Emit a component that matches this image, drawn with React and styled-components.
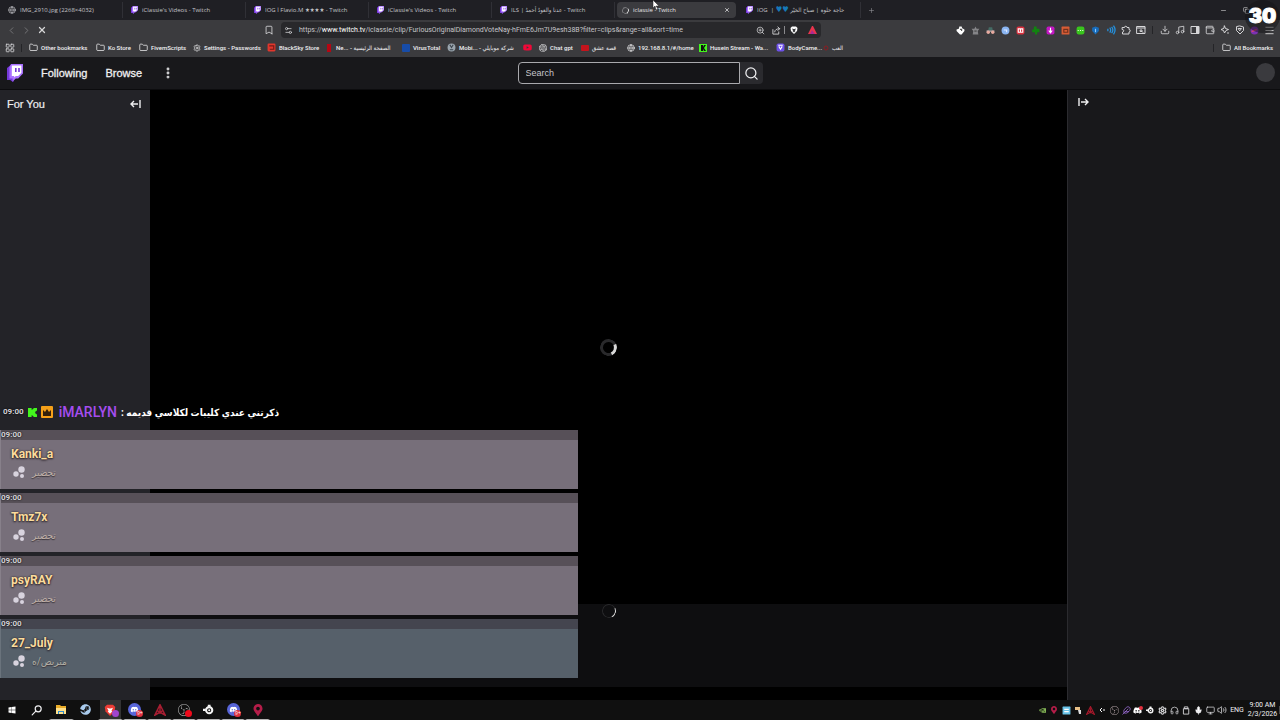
import React from 'react';
import styled, { createGlobalStyle, css, keyframes } from 'styled-components';
import {
  ArrowRightFromLine, Bookmark, ChevronLeft, ChevronRight, Download, Folder,
  Globe, Headphones, LayoutGrid, Menu, Mic, Minus, Monitor, Music, PanelRight, Plus,
  Search, Settings, Volume2, Wallet, X, ZoomIn, Copy,
  Settings2, EllipsisVertical, Feather,
} from 'lucide-react';
import { FaDiscord, FaMapMarkerAlt, FaSteam, FaWindows, FaYoutube } from 'react-icons/fa';
import { SiNvidia, SiObsstudio, SiOpenai } from 'react-icons/si';

const uiFont = '"Open Sans", "DejaVu Sans Condensed", "DejaVu Sans", sans-serif';
const narrowFont = 'Roboto, "DejaVu Sans Condensed", "DejaVu Sans", sans-serif';

const GlobalStyle = createGlobalStyle`
  * { box-sizing: border-box; }
  body { margin: 0; background: #000; color: #efeff1; font-family: ${uiFont}; }
  button, input { font: inherit; color: inherit; margin: 0; padding: 0; border: 0; background: none; }
  a { color: inherit; text-decoration: none; }
  svg { display: block; flex: none; }
`;

const Screen = styled.div`
  position: relative;
  display: flex;
  flex-direction: column;
  height: 100vh;
  overflow: hidden;
`;

/* browser chrome */

const TabStrip = styled.div`
  display: flex;
  align-items: center;
  flex: none;
  height: 20px;
  background: #1f1f24;
  font-size: 6px;
  color: #c4c4c8;
`;

const Tab = styled.button`
  display: flex;
  align-items: center;
  gap: 4px;
  flex: 0 1 123px;
  min-width: 0;
  height: 16px;
  padding: 0 8px;
  white-space: nowrap;
  border-right: 1px solid #303036;
  border-radius: 0;
  ${(props) => props.$active && css`
    flex-basis: 119px;
    margin: 0 2px;
    padding: 0 5px;
    background: #3b3b3f;
    border-color: transparent;
    border-radius: 4px;
    color: #e6e6e8;
  `}
`;

const TabTitle = styled.span`
  flex: 1;
  overflow: hidden;
  line-height: 12px;
  text-align: left;
`;

const Heart = styled.span`
  color: #1679b8;
  font-size: 8px;
  line-height: 8px;
`;

const IconButton = styled.button`
  display: flex;
  align-items: center;
  justify-content: center;
  flex: none;
  width: ${(props) => props.$w || 15}px;
  height: 16px;
  color: ${(props) => props.$color || '#d6d6d8'};
`;

const WindowButtons = styled.div`
  display: flex;
  gap: 8px;
  margin-left: auto;
  padding-right: 26px;
`;

const Toolbar = styled.div`
  display: flex;
  align-items: center;
  flex: none;
  height: 20px;
  padding: 0 3px 0 4px;
  background: #3b3b3e;
`;

const Nav = styled.div`
  display: flex;
  flex: 0 0 257px;
`;

const Address = styled.div`
  display: flex;
  align-items: center;
  flex: 1;
  min-width: 0;
  height: 16px;
  margin: 0 132px 0 5px;
  border-radius: 4px;
  background: #28282b;
`;

const Url = styled.a`
  flex: 1;
  overflow: hidden;
  padding-left: 3px;
  font-family: ${narrowFont};
  font-size: 7px;
  white-space: nowrap;
  color: #c6c6c9;
`;

const Host = styled.span`
  color: #fff;
`;

const Divider = styled.span`
  flex: none;
  width: 1px;
  height: 8px;
  margin: 0 ${(props) => props.$space || 0}px;
  background: ${(props) => props.$color || '#242427'};
`;

const BookmarkBar = styled.nav`
  display: flex;
  align-items: center;
  flex: none;
  height: 17px;
  padding: 0 7px 2px 2px;
  background: #3b3b3e;
  color: #f0f0f2;
  font-family: ${narrowFont};
  font-size: 6px;
  font-weight: 500;
`;

const BookmarkLink = styled.a`
  display: flex;
  align-items: center;
  gap: 3px;
  flex: 0 0 ${(props) => props.$w}px;
  white-space: nowrap;
`;

const AllBookmarks = styled(BookmarkLink)`
  flex: none;
`;

const Right = styled.div`
  display: flex;
  align-items: center;
  margin-left: auto;
`;

const Badge = styled.span`
  display: flex;
  flex: none;
  width: 8px;
  height: ${(props) => props.$h || 8}px;
  border-radius: 1px;
  background: ${(props) => props.$bg};
`;

/* twitch page */

const Header = styled.header`
  display: grid;
  grid-template-columns: 1fr auto 1fr;
  align-items: center;
  flex: none;
  height: 33px;
  background: #18181b;
  border-bottom: 1px solid #0c0c0e;
  font-family: "Liberation Sans", Arial, sans-serif;
`;

const HeaderLinks = styled.nav`
  display: flex;
  align-items: center;
  gap: 18px;
  padding-left: 7px;
  font-size: 11px;
  -webkit-text-stroke: 0.3px #efeff1;
`;

const SearchForm = styled.form`
  display: flex;
  height: 22px;
`;

const SearchInput = styled.input`
  width: 222px;
  padding: 0 7px;
  border: 1px solid #a9a9ad;
  border-radius: 4px 0 0 4px;
  background: #151518;
  font-size: 9px;
  outline: none;

  &::placeholder { color: #c6c6ca; opacity: 1; }
`;

const SearchButton = styled.button`
  display: flex;
  align-items: center;
  justify-content: center;
  width: 23px;
  border-radius: 0 4px 4px 0;
  background: #2a2a2e;
`;

const Avatar = styled.button`
  justify-self: end;
  width: 19px;
  height: 19px;
  margin: 0 5px 2px 0;
  border-radius: 50%;
  background: #3a3a3e;
`;

const Body = styled.div`
  display: flex;
  flex: 1;
  min-height: 0;
`;

const Sidebar = styled.aside`
  display: flex;
  align-items: flex-start;
  justify-content: space-between;
  flex: 0 0 150px;
  padding: 6px 8px 6px 7px;
  background: #232328;
  font: 11px/16px "Liberation Sans", Arial, sans-serif;
  -webkit-text-stroke: 0.2px #efeff1;
`;

const Main = styled.main`
  display: flex;
  flex-direction: column;
  flex: 1;
  background: #000;
`;

const Player = styled.div`
  display: flex;
  align-items: center;
  justify-content: center;
  flex: 1;
`;

const Details = styled.div`
  display: flex;
  align-items: flex-start;
  justify-content: center;
  height: 83px;
  margin-bottom: 13px;
  background: #0e0e10;
`;

const spin = keyframes`
  from { transform: rotate(0deg); }
  to { transform: rotate(360deg); }
`;

const Spinner = styled.span`
  flex: none;
  width: ${(props) => props.$size}px;
  height: ${(props) => props.$size}px;
  border: ${(props) => props.$stroke}px solid ${(props) => props.$track || '#29292b'};
  border-right-color: #d8d8d8;
  border-radius: 50%;
  rotate: 20deg;
  animation: ${spin} 1s linear infinite paused;
`;

const ChatColumn = styled.aside`
  flex: 0 0 213px;
  padding: 4px 8px;
  border-left: 1px solid #2b2b2f;
  background: #18181b;
`;

/* chat overlay */

const Overlay = styled.section`
  position: absolute;
  left: 0;
  bottom: 42px;
  width: 578px;
  max-width: 100%;
  font-family: Roboto, "DejaVu Sans Condensed", "DejaVu Sans", sans-serif;
`;

const Message = styled.div`
  display: flex;
  align-items: center;
  gap: 4px;
  height: 18px;
  margin-bottom: 9px;
  padding-left: 3px;
`;

const Time = styled.time`
  font-size: 8px;
  line-height: 10px;
  font-weight: 700;
  color: #d4d2d6;
  text-shadow: 0 0 2px #000;
`;

const Author = styled.span`
  padding-left: 2px;
  font-size: 14px;
  font-weight: 500;
  color: #a64df0;
`;

const MessageText = styled.span`
  font-size: 10px;
  font-weight: 700;
  color: #fff;
`;

const Card = styled.article`
  height: 59px;
  margin-top: 4px;
  border-left: 1px solid rgba(255, 255, 255, 0.12);
  background: ${(props) => (props.$blue ? '#56606a' : '#776f7a')};
`;

const CardTop = styled.div`
  display: flex;
  height: 10px;
  background: ${(props) => (props.$blue ? '#44454f' : '#575058')};
`;

const CardBody = styled.div`
  padding: 5px 10px;
`;

const Viewer = styled.div`
  font-size: 12px;
  line-height: 18px;
  font-weight: 700;
  color: #fbdc9c;
  text-shadow: 0 1px 2px #2a2228, 0 0 2px #2a2228;
`;

const Reply = styled.div`
  display: flex;
  align-items: center;
  gap: 6px;
  height: 18px;
  padding-left: 2px;
  font-size: 10px;
  color: ${(props) => (props.$blue ? '#b0aea4' : '#bdaea6')};
  text-shadow: 0 1px 1px #3a343b;
`;

/* windows taskbar */

const Taskbar = styled.footer`
  display: flex;
  flex: none;
  height: 20px;
  background: #101010;
`;

const Apps = styled.div`
  display: grid;
  grid-auto-flow: column;
  grid-auto-columns: 1fr;
  width: 270px;
`;

const TaskButton = styled.button`
  position: relative;
  display: flex;
  align-items: center;
  justify-content: center;
  border-bottom: 1px solid ${(props) => (props.$open ? '#b4b4b4' : 'transparent')};
  border-left: 2px solid #101010;
  border-right: 2px solid #101010;
  background: ${(props) => (props.$active ? '#333' : 'none')};
`;

const Unread = styled.span`
  position: absolute;
  right: 2px;
  bottom: 2px;
  width: 7px;
  height: 7px;
  border-radius: 50%;
  background: ${(props) => props.$bg || '#e0303e'};
  color: #fff;
  font-size: 5px;
  line-height: 7px;
  text-align: center;
`;

const Tray = styled.div`
  display: flex;
  align-items: center;
  margin-left: auto;
  font-size: 7px;
`;

const Language = styled.span`
  width: 18px;
  font-family: ${narrowFont};
  text-align: center;
`;

const Clock = styled.div`
  width: 33px;
  font-family: ${narrowFont};
  font-size: 7px;
  line-height: 9px;
  text-align: center;
`;

const Counter = styled.div`
  position: absolute;
  top: 0;
  right: 0;
  width: 35px;
  height: 33px;
  border-radius: 50%;
  background: rgba(20, 20, 22, 0.5);
  color: #fff;
  font: 900 20px/33px Inter, sans-serif;
  text-align: center;
  -webkit-text-stroke: 1px #fff;
`;

const Pointer = styled.svg`
  position: absolute;
  top: 0;
  left: 652px;
`;

const TwitchLogo = ({ size }) => (
  <svg width={size} height={size * 1.15} viewBox="0 0 20 23">
    <path d="M0 5L5 1v14l3 3v5l-4-3H0z" fill="#7438d8" />
    <path d="M5 0h15v12l-6 6h-3l-4 4v-4H3V4z" fill="#a970ff" />
    <path d="M6 2h12v9l-4 4h-3l-2 2v-2H6z" fill="#fff" />
    <path d="M10 5h2v5h-2zM14 5h2v5h-2z" fill="#7438d8" />
  </svg>
);

const KickLogo = ({ size }) => (
  <svg width={size} height={size} viewBox="0 0 10 10">
    <path d="M0 0h4v2h1V1h1V0h4v3H9v1H8v2h1v1h1v3H6V9H5V8H4v2H0z" fill="#43f51d" />
  </svg>
);

const KickTile = () => (
  <svg width="8" height="8" viewBox="0 0 8 8">
    <rect width="8" height="8" fill="#43f51d" />
    <path d="M2 1h2v2l1-2h2L5 4l2 3H5L4 5v2H2z" fill="#101010" />
  </svg>
);

const Dots = () => (
  <svg width="13" height="13" viewBox="0 0 13 13" fill="#d8d3de">
    <circle cx="8.500" cy="3.500" r="3.200" />
    <circle cx="3" cy="8" r="2.700" />
    <circle cx="9" cy="10" r="2" />
  </svg>
);

const Brave = ({ size, color }) => (
  <svg width={size} height={size} viewBox="0 0 16 16">
    <path d="M4 1h8l3 3-1 6-6 6-6-6-1-6z" fill={color} />
    <path d="M4 5l3 1h2l3-1-2 4 1 1-3 3-3-3 1-1z" fill={color === '#fff' ? '#3b3b3e' : '#fff'} />
  </svg>
);

const Peak = ({ size, color }) => (
  <svg width={size} height={size} viewBox="0 0 16 16" fill="none" stroke={color} strokeWidth="2">
    <path d="M1 15L8 1l7 14-5-3H6zM8 4v8M5 9l3 3 3-3" />
  </svg>
);

const Line = ({ size = 10, d }) => (
  <svg width={size} height={size} viewBox="0 0 20 20" fill="none" stroke="currentColor" strokeWidth="2" strokeLinejoin="round" strokeLinecap="round">
    <path d={d} />
  </svg>
);

const Disc = ({ bg, fg = '#fff', r = 7, d = 'M5 8h6M8 5v6' }) => (
  <svg width="9" height="9" viewBox="0 0 16 16">
    <rect x="1" y="1" width="14" height="14" rx={r} fill={bg} />
    <path d={d} fill="none" stroke={fg} strokeWidth="2" />
  </svg>
);

const DiscordDisc = () => (
  <svg width="13" height="13" viewBox="0 0 16 16">
    <circle cx="8" cy="8" r="8" fill="#5865d8" />
    <g transform="translate(3 3)"><FaDiscord size={10} color="#fff" /></g>
  </svg>
);

const SteelRing = ({ size }) => (
  <svg width={size} height={size} viewBox="0 0 16 16">
    <circle cx="9" cy="9" r="4.500" fill="none" stroke="#f4f4f4" strokeWidth="3" />
    <circle cx="9" cy="9" r="1.500" fill="#f4f4f4" />
    <path d="M7 1h4v3H7zM0 7h4v3H0z" fill="#f4f4f4" />
  </svg>
);

const CollapseIcon = ({ flip }) => (
  <svg width="12" height="12" viewBox="0 0 12 12" fill="none" stroke="#efeff1" strokeWidth="1.400">
    <path d={flip ? 'M11 2v8M9 6H2M5 3L2 6l3 3' : 'M1 2v8M3 6h7M7 3l3 3-3 3'} />
  </svg>
);

const tabs = [
  { icon: <Globe size={8} />, title: 'IMG_2910.jpg (2268×4032)' },
  { title: "iClassie's Videos - Twitch" },
  { title: 'IOG  ا Flavio.M ★★★★ - Twitch' },
  { title: "iClassie's Videos - Twitch" },
  { title: 'ILS | عدنا والعودُ أحمدُ - Twitch' },
  { icon: <Spinner $size={7} $stroke={1} $track="#77777a" />, title: 'iclassie - Twitch', active: true },
  { title: <>IOG &nbsp;| <Heart>♥♥</Heart> حاجة حلوة | صباح الخيْر</> },
];

const folder = <Folder size={9} strokeWidth={2} />;

const bookmarks = [
  { icon: folder, label: 'Other bookmarks', w: 67 },
  { icon: folder, label: 'Ko Store', w: 43 },
  { icon: folder, label: 'FivemScripts', w: 54 },
  { icon: <Settings size={8} />, label: 'Settings - Passwords', w: 74 },
  { icon: <Disc bg="#e0362c" fg="#701b18" r={2} d="M4 5h8v6H5" />, label: 'BlackSky Store', w: 58 },
  { icon: <svg width="8" height="8" viewBox="0 0 8 8"><path d="M2 0h4v8H2z" fill="#b40613" /></svg>, label: 'Ne... - الصفحة الرئيسية', w: 77 },
  { icon: <Badge $bg="#174ca8" />, label: 'VirusTotal', w: 45 },
  { icon: <Disc bg="#9aa5ae" fg="#39434c" d="M5 3l3 5 3-5M5 12h6" />, label: 'Mobi... - شركة موبايلي', w: 76 },
  { icon: <FaYoutube size={9} color="#f00838" />, label: '', w: 16 },
  { icon: <SiOpenai size={8} />, label: 'Chat gpt', w: 42 },
  { icon: <Badge $bg="#c4141c" $h={6} />, label: 'قصة عشق', w: 46 },
  { icon: <Globe size={8} />, label: '192.168.8.1/#/home', w: 72 },
  { icon: <KickTile />, label: 'Husein Stream - Wa...', w: 77 },
  { icon: <Disc bg="#6d50e8" r={3} d="M5 6l3 5 3-5M4 4h8" />, label: 'BodyCame...', w: 47 },
  { icon: <svg width="6" height="6" viewBox="0 0 6 6"><circle cx="3" cy="3" r="2" fill="none" stroke="#8b1d22" /></svg>, label: 'العب', w: 24 },
];

const extensions = [
  ['Tag', <svg width="9" height="9" viewBox="0 0 16 16"><path d="M6 1h4l1 3 4 2v3l-5 6H7L1 9V6l4-1z" fill="#fff" /><path d="M7 6h3v3" fill="none" stroke="#555" strokeWidth="2" /></svg>],
  ['Star', <svg width="9" height="9" viewBox="0 0 16 16"><path d="M8 1l2 4h5l-3 4 1 6H3l1-6-3-4h5z" fill="#858588" /><path d="M6 9h4" stroke="#444" strokeWidth="2" /></svg>],
  ['Incognito', <svg width="9" height="9" viewBox="0 0 16 16"><path d="M5 2h6l1 5H4z" fill="#456b65" /><path d="M1 9h14" stroke="#ccc" strokeWidth="2" /><circle cx="4" cy="11" r="3" fill="#e8aaa0" /><circle cx="12" cy="11" r="3" fill="#e8aaa0" /></svg>],
  ['Globe', <Disc bg="#8ab5f2" fg="#dfeaff" d="M5 7h5v4" />],
  ['Recorder', <svg width="9" height="9" viewBox="0 0 16 16"><rect x="1" y="1" width="14" height="14" rx="3" fill="#d92e3c" /><rect x="3" y="4" width="10" height="8" fill="#fff" /><path d="M5 6h2v4H5zM9 6h2v4H9z" fill="#d92e3c" /></svg>],
  ['Clover', <svg width="9" height="9" viewBox="0 0 16 16"><path d="M5 1h5v4h5v6h-4v4H7v-4H2V6h3z" fill="#11830f" /></svg>],
  ['Downloader', <Disc bg="#c316c4" r={3} d="M8 3v9M5 8l3 4 3-4" />],
  ['Capture', <Disc bg="#d75c35" fg="#71301d" r={1} d="M5 6h7v5H5z" />],
  ['New', <Disc bg="#39c51d" fg="#dfffd8" r={4} d="M3 8h2M7 8h2M11 8h2" />],
  ['Guard', <svg width="9" height="9" viewBox="0 0 16 16"><path d="M8 1l6 2v6l-6 6-6-6V3z" fill="#176bb9" /><path d="M8 5v6" stroke="#8cc8ff" strokeWidth="2" /></svg>],
  ['Sound', <svg width="10" height="10" viewBox="0 0 16 16" fill="none" stroke="#2492e0" strokeWidth="2"><path d="M3 6v4M6 4q3 4 0 8M9 3q4 5 0 10M12 1q5 7 0 14" /></svg>],
  ['Extensions', <Line d="M3 5h4a2.500 2.500 0 0 1 5 0h4v4a2.500 2.500 0 0 1 0 5v4H3v-4a2.500 2.500 0 0 0 0-5z" />],
  ['Page search', <Line d="M2 3h16v14H2zM2 6h16M9 10h3v3H9zM12 13l2 2" />],
];

const tools = [
  ['Downloads', <Download size={10} />],
  ['Playlist', <Music size={10} />],
  ['Side panel', <svg width="10" height="10" viewBox="0 0 20 20"><path d="M2 3h16v14H2z" fill="none" stroke="currentColor" strokeWidth="2" /><path d="M12 3h6v14h-6z" fill="currentColor" /></svg>],
  ['Wallet', <Wallet size={10} />],
  ['Leo', <Line d="M9 2l2 5 6 2-5 2-3 5-2-5-5-2 5-2zM16 15v2" />],
  ['VPN', <Line d="M10 2l7 2v7l-7 7-7-7V4zM7 7h6l-3 4z" />],
  ['Profile', <Disc bg="#7c31b3" fg="#dd4672" d="M3 10l9-4" />],
  ['Menu', <Menu size={11} />],
];

const apps = [
  { name: 'Start', icon: <FaWindows size={8} color="#fff" /> },
  { name: 'Search', icon: <Line size={12} d="M17 8a5 5 0 1 1-10 0 5 5 0 1 1 10 0M8 12l-6 6" /> },
  { name: 'Explorer', open: true, icon: <svg width="12" height="11" viewBox="0 0 12 11"><path d="M1 1h4l1 1h5v8H1z" fill="#e9ac28" /><path d="M1 4h10v6H1z" fill="#ffe08a" /><path d="M3 7h6v3H8V8H4v2H3z" fill="#2d8bd0" /></svg> },
  { name: 'Steam', icon: <FaSteam size={11} color="#a9cbed" /> },
  { name: 'Brave', open: true, active: true, icon: <Brave size={12} color="#ed3d35" />, unread: '', badge: '#a044cf' },
  { name: 'Discord', open: true, icon: <DiscordDisc />, unread: '9+' },
  { name: 'Peak', open: true, icon: <Peak size={12} color="#a71e32" /> },
  { name: 'OBS', open: true, icon: <SiObsstudio size={12} color="#bbb" />, unread: '', badge: '#f00b1c' },
  { name: 'SteelSeries', open: true, icon: <SteelRing size={11} /> },
  { name: 'Discord PTB', open: true, icon: <DiscordDisc />, unread: '9+' },
  { name: 'Maps', open: true, icon: <FaMapMarkerAlt size={12} color="#b51d49" /> },
];

const tray = [
  ['NVIDIA', <SiNvidia size={7} color="#86b957" />],
  ['Maps', <FaMapMarkerAlt size={8} color="#b51d49" />],
  ['Panel', <Disc bg="#69c3e8" r={1} d="M4 6h8M4 10h8" />],
  ['Tool', <svg width="8" height="8" viewBox="0 0 8 8"><path d="M1 1h5v3H1z" fill="#e7bf86" /><path d="M4 4h3v4H5z" fill="#ddd" /></svg>],
  ['Peak', <Peak size={9} color="#a3182a" />],
  ['Logi', <svg width="8" height="8" viewBox="0 0 8 8" fill="none" stroke="#fff" strokeWidth="1"><path d="M4 2L2 4l2 2M5 4h2" /></svg>],
  ['OBS', <SiObsstudio size={9} color="#b5a4a7" />],
  ['Feather', <Feather size={9} color="#a070dc" />],
  ['Discord', <svg width="10" height="9" viewBox="0 0 10 9"><FaDiscord size={9} color="#fff" /><circle cx="8" cy="2" r="2" fill="#e0303e" /></svg>],
  ['Steel', <SteelRing size={8} />],
  ['Settings', <Settings size={9} strokeWidth={3} />],
  ['Headset', <Headphones size={9} />],
  ['USB', <Line size={9} d="M6 2h7v4H6zM4 6h11v12H4z" />],
  ['Microphone', <Mic size={9} fill="#fff" />],
  ['Network', <Monitor size={9} />],
  ['Volume', <Volume2 size={10} />],
];

const viewers = [
  { name: 'Kanki_a', text: 'تحضير' },
  { name: 'Tmz7x', text: 'تحضير' },
  { name: 'psyRAY', text: 'تحضير' },
  { name: '27_July', text: 'متربص/ه', blue: true },
];

const Browser = () => (
  <>
    <TabStrip>
      {tabs.map((tab, i) => (
        <Tab key={i} $active={tab.active}>
          {tab.icon || <TwitchLogo size={7} />}
          <TabTitle>{tab.title}</TabTitle>
          {tab.active && <X size={6} strokeWidth={3} />}
        </Tab>
      ))}
      <IconButton aria-label="New tab" $w={20} $color="#909096"><Plus size={7} /></IconButton>
      <WindowButtons>
        <IconButton aria-label="Minimize"><Minus size={7} /></IconButton>
        <IconButton aria-label="Restore"><Copy size={7} /></IconButton>
      </WindowButtons>
    </TabStrip>
    <Toolbar>
      <Nav>
        <IconButton aria-label="Back" $color="#77777a"><ChevronLeft size={11} /></IconButton>
        <IconButton aria-label="Forward" $color="#77777a"><ChevronRight size={11} /></IconButton>
        <IconButton aria-label="Stop"><X size={10} strokeWidth={3} /></IconButton>
      </Nav>
      <IconButton aria-label="Bookmark"><Bookmark size={10} /></IconButton>
      <Address>
        <IconButton aria-label="Site settings"><Settings2 size={9} /></IconButton>
        <Url href="#clip">
          https://<Host>www.twitch.tv</Host>/iclassie/clip/FuriousOriginalDiamondVoteNay-hFmE6Jm7U9esh38B?filter=clips&amp;range=all&amp;sort=time
        </Url>
        <IconButton aria-label="Zoom" $w={18}><ZoomIn size={9} /></IconButton>
        <IconButton aria-label="Share"><Line size={9} d="M2 8v10h13v-5M6 13q0-7 11-7M13 2l4 4-4 4" /></IconButton>
        <Divider $color="#8a8a8d" />
        <IconButton aria-label="Shields" $w={18}><Brave size={8} color="#fff" /></IconButton>
        <IconButton aria-label="Rewards" $w={18}>
          <svg width="9" height="8" viewBox="0 0 9 8"><path d="M4 0h1l4 8H0z" fill="#e9344d" /><path d="M4 4l3 4H2z" fill="#a92a91" /></svg>
        </IconButton>
      </Address>
      {extensions.map(([name, icon]) => <IconButton key={name} aria-label={name}>{icon}</IconButton>)}
      <Divider $space={4} />
      {tools.map(([name, icon]) => <IconButton key={name} aria-label={name}>{icon}</IconButton>)}
    </Toolbar>
    <BookmarkBar>
      <IconButton aria-label="Apps"><LayoutGrid size={10} /></IconButton>
      <Divider $space={4} />
      <Divider $color="transparent" $space={1} />
      {bookmarks.map((item, i) => (
        <BookmarkLink key={i} href="#bookmark" $w={item.w}>{item.icon}{item.label}</BookmarkLink>
      ))}
      <Right>
        <Divider $space={8} />
        <AllBookmarks href="#all">{folder}All Bookmarks</AllBookmarks>
      </Right>
    </BookmarkBar>
  </>
);

const ChatOverlay = () => (
  <Overlay>
    <Message>
      <Time>09:00</Time>
      <KickLogo size={9} />
      <svg width="12" height="12" viewBox="0 0 12 12">
        <rect width="12" height="12" rx="1" fill="#f5a019" />
        <path d="M2 4l2 2 2-3 2 3 2-2v6H2z" fill="#33200b" />
      </svg>
      <Author>iMARLYN</Author>
      <MessageText>: ذكرتني عندي كليبات لكلاسي قديمه</MessageText>
    </Message>
    {viewers.map((viewer) => (
      <Card key={viewer.name} $blue={viewer.blue}>
        <CardTop $blue={viewer.blue}><Time>09:00</Time></CardTop>
        <CardBody>
          <Viewer>{viewer.name}</Viewer>
          <Reply $blue={viewer.blue}><Dots />{viewer.text}</Reply>
        </CardBody>
      </Card>
    ))}
  </Overlay>
);

const App = () => (
  <Screen>
    <GlobalStyle />
    <Browser />
    <Header>
      <HeaderLinks>
        <TwitchLogo size={16} />
        <a href="#following">Following</a>
        <a href="#browse">Browse</a>
        <IconButton aria-label="More"><EllipsisVertical size={14} strokeWidth={3} /></IconButton>
      </HeaderLinks>
      <SearchForm>
        <SearchInput type="text" placeholder="Search" aria-label="Search" />
        <SearchButton type="button" aria-label="Submit search"><Search size={15} /></SearchButton>
      </SearchForm>
      <Avatar aria-label="Account" />
    </Header>
    <Body>
      <Sidebar>
        <span>For You</span>
        <IconButton aria-label="Collapse"><CollapseIcon flip /></IconButton>
      </Sidebar>
      <Main>
        <Player><Spinner $size={17} $stroke={3} /></Player>
        <Details><Spinner $size={14} $stroke={1} /></Details>
      </Main>
      <ChatColumn>
        <IconButton aria-label="Collapse chat"><CollapseIcon /></IconButton>
      </ChatColumn>
    </Body>
    <Taskbar>
      <Apps>
        {apps.map((app) => (
          <TaskButton key={app.name} aria-label={app.name} $open={app.open} $active={app.active}>
            {app.icon}
            {app.unread !== undefined && <Unread $bg={app.badge}>{app.unread}</Unread>}
          </TaskButton>
        ))}
      </Apps>
      <Tray>
        {tray.map(([name, icon]) => <IconButton key={name} aria-label={name} $w={12}>{icon}</IconButton>)}
        <Language>ENG</Language>
        <Clock>9:00 AM<br />2/3/2026</Clock>
        <Divider $color="#4a4a4a" />
      </Tray>
    </Taskbar>
    <ChatOverlay />
    <Counter>30</Counter>
    <Pointer width="8" height="11" viewBox="0 0 8 11">
      <path d="M1 0v8l2-2 1 4 2-1-2-3h3z" fill="#fff" stroke="#222" strokeWidth="0.500" />
    </Pointer>
  </Screen>
);

export default App;
